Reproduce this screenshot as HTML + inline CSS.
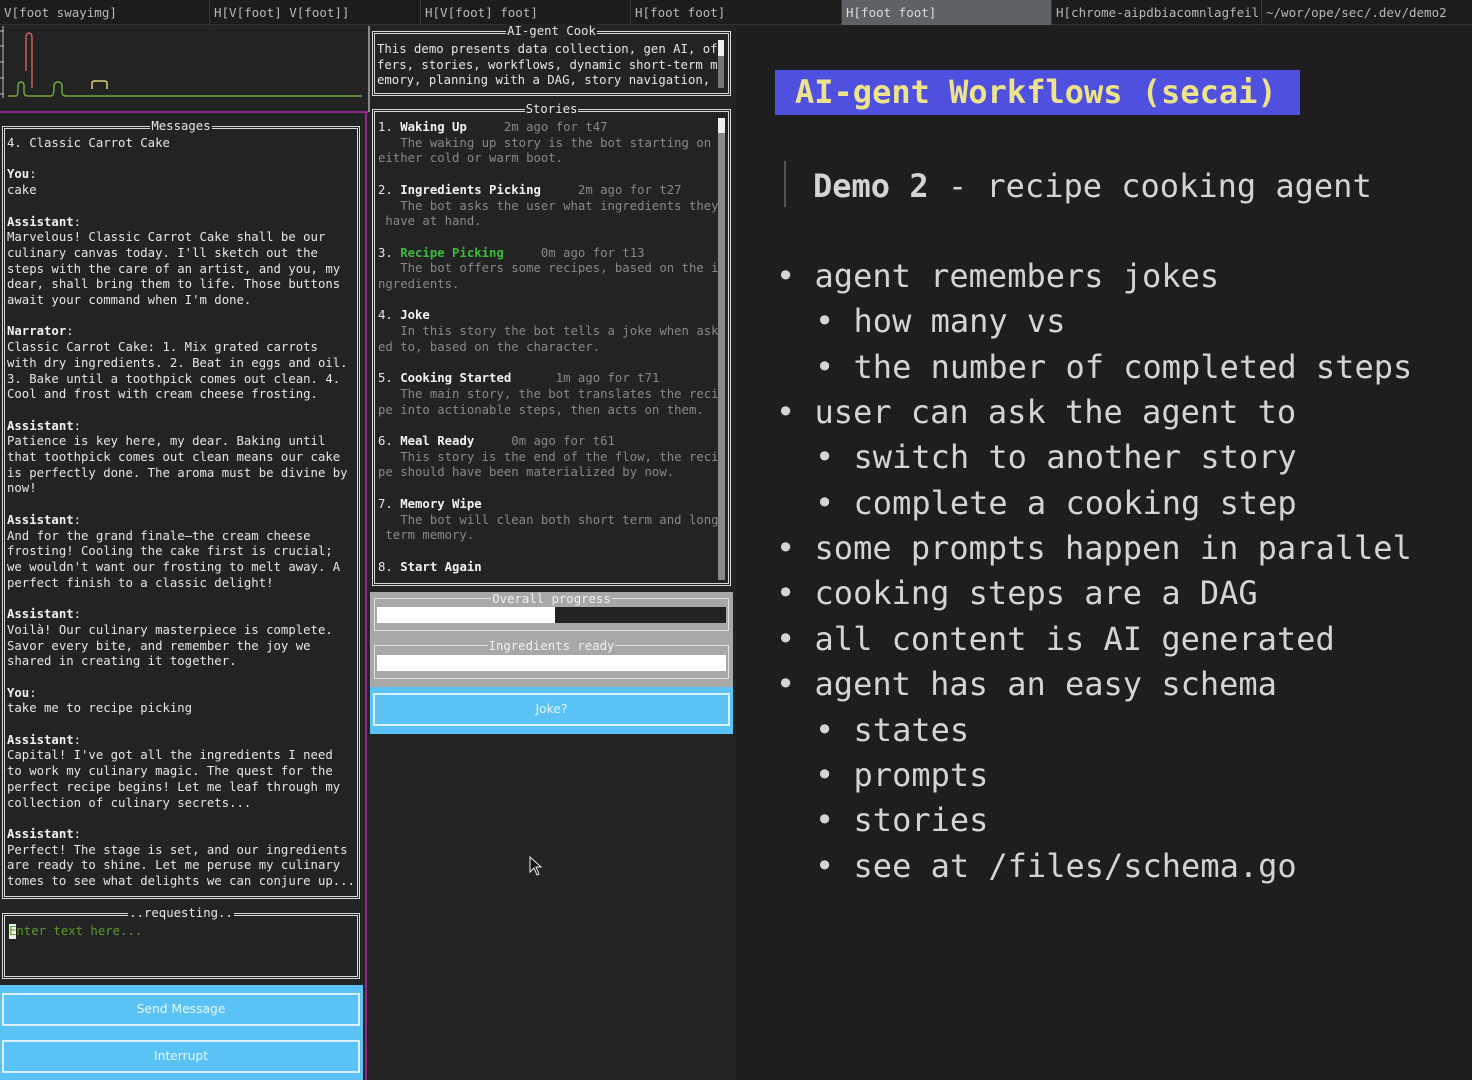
<!DOCTYPE html>
<html><head><meta charset="utf-8"><style>
*{margin:0;padding:0;box-sizing:border-box}
body{width:1472px;height:1080px;background:#232323;position:relative;overflow:hidden;font-family:"DejaVu Sans Mono","Liberation Mono",monospace;color:#e6e6e6}
.a{position:absolute}
.tab{position:absolute;top:0;height:25px;font-size:12.5px;line-height:25px;color:#b8b8b8;padding-left:4px;border-right:1px solid #3a3a3a;white-space:nowrap;overflow:hidden}
pre{font-family:"DejaVu Sans Mono","Liberation Mono",monospace;font-size:12.3px;line-height:15.7px;white-space:pre}
.box{position:absolute;border:3px double #d8d8d8}
.ttl{position:absolute;top:-10px;left:0;right:0;text-align:center;font-size:12.3px;line-height:15px}
.ttl span{background:#232323;padding:0 1px}
.g{color:#888}
b{color:#f2f2f2}
.r{position:absolute;font-size:32px;line-height:40px;color:#d4d4d4;white-space:pre;font-family:"DejaVu Sans Mono",monospace}
.btn{position:absolute;border:2px solid #d8f0ff;color:#e8f6ff;text-align:center;font-size:12.3px;font-family:"DejaVu Sans",sans-serif}
</style></head><body>
<div class="a" style="left:0;top:0;width:1472px;height:25px;background:#1c1c1c;border-bottom:1px solid #333"></div>
<div class="tab" style="left:0;width:210px">V[foot swayimg]</div>
<div class="tab" style="left:210px;width:211px">H[V[foot] V[foot]]</div>
<div class="tab" style="left:421px;width:210px">H[V[foot] foot]</div>
<div class="tab" style="left:631px;width:211px">H[foot foot]</div>
<div class="tab" style="left:842px;width:210px;background:#5e6165;color:#ddd">H[foot foot]</div>
<div class="tab" style="left:1052px;width:210px">H[chrome-aipdbiacomnlagfeil</div>
<div class="tab" style="left:1262px;width:210px;border:none">~/wor/ope/sec/.dev/demo2</div>

<div class="a" style="left:736px;top:26px;width:736px;height:1054px;background:#1e1e1e"></div>

<!-- graph -->
<svg class="a" style="left:0;top:26px" width="366" height="90">
<line x1="3" y1="0" x2="3" y2="72" stroke="#bbb" stroke-width="1"/>
<path d="M0 5h4M0 20h4M0 36h4M0 52h4M0 68h4" stroke="#bbb"/>
<path d="M8 70H16Q18 70 18 62V60Q18 56 21 56Q24 56 24 60V66Q24 70 28 70H51Q54 70 54 62V60Q54 56 58 56Q62 56 62 60V66Q62 70 66 70H362" stroke="#6fa83a" stroke-width="1.5" fill="none"/>
<path d="M26 45V12Q26 7 29 7Q32 7 32 12V62" stroke="#c86060" stroke-width="1.5" fill="none"/>
<path d="M92 63V57Q92 55 95 55H104Q107 55 107 57V63" stroke="#d8d080" stroke-width="1.5" fill="none"/>
</svg>
<div class="a" style="left:368px;top:26px;width:2px;height:86px;background:#8a8a8a"></div>
<div class="a" style="left:0;top:111px;width:368px;height:2px;background:#8e2a8e"></div>
<div class="a" style="left:365px;top:111px;width:2px;height:969px;background:#8e2a8e"></div>

<!-- messages -->
<div class="box" style="left:2px;top:126px;width:358px;height:773px">
<div class="ttl"><span>Messages</span></div>
<pre class="a" style="left:2px;top:7px">4. Classic Carrot Cake

<b>You</b>:
cake

<b>Assistant</b>:
Marvelous! Classic Carrot Cake shall be our
culinary canvas today. I'll sketch out the
steps with the care of an artist, and you, my
dear, shall bring them to life. Those buttons
await your command when I'm done.

<b>Narrator</b>:
Classic Carrot Cake: 1. Mix grated carrots
with dry ingredients. 2. Beat in eggs and oil.
3. Bake until a toothpick comes out clean. 4.
Cool and frost with cream cheese frosting.

<b>Assistant</b>:
Patience is key here, my dear. Baking until
that toothpick comes out clean means our cake
is perfectly done. The aroma must be divine by
now!

<b>Assistant</b>:
And for the grand finale—the cream cheese
frosting! Cooling the cake first is crucial;
we wouldn't want our frosting to melt away. A
perfect finish to a classic delight!

<b>Assistant</b>:
Voilà! Our culinary masterpiece is complete.
Savor every bite, and remember the joy we
shared in creating it together.

<b>You</b>:
take me to recipe picking

<b>Assistant</b>:
Capital! I've got all the ingredients I need
to work my culinary magic. The quest for the
perfect recipe begins! Let me leaf through my
collection of culinary secrets...

<b>Assistant</b>:
Perfect! The stage is set, and our ingredients
are ready to shine. Let me peruse my culinary
tomes to see what delights we can conjure up...</pre>
</div>

<div class="box" style="left:2px;top:913px;width:358px;height:66px">
<div class="ttl"><span>..requesting..</span></div>
<div class="a" style="left:4px;top:8px;width:7px;height:15px;background:#eee"></div>
<pre class="a" style="left:4px;top:8px;color:#5a9a30">Enter text here...</pre>
</div>

<div class="a" style="left:0;top:985px;width:363px;height:95px;background:#5bc2f5"></div>
<div class="btn" style="left:2px;top:993px;width:358px;height:33px;line-height:29px">Send Message</div>
<div class="btn" style="left:2px;top:1040px;width:358px;height:33px;line-height:29px">Interrupt</div>

<!-- AI-gent cook -->
<div class="box" style="left:372px;top:31px;width:359px;height:65px">
<div class="ttl"><span>AI-gent Cook</span></div>
<pre class="a" style="left:2px;top:8px">This demo presents data collection, gen AI, of
fers, stories, workflows, dynamic short-term m
emory, planning with a DAG, story navigation,</pre>
<div class="a" style="left:343px;top:6px;width:6px;height:48px;background:#777"></div>
<div class="a" style="left:343px;top:6px;width:6px;height:16px;background:#eee"></div>
</div>

<!-- stories -->
<div class="box" style="left:372px;top:109px;width:359px;height:477px">
<div class="ttl"><span>Stories</span></div>
<pre class="a" style="left:3px;top:8px">1. <b>Waking Up</b>     <span class="g">2m ago for t47</span>
<span class="g">   The waking up story is the bot starting on
either cold or warm boot.</span>

2. <b>Ingredients Picking</b>     <span class="g">2m ago for t27</span>
<span class="g">   The bot asks the user what ingredients they
 have at hand.</span>

3. <b style="color:#3cba3c">Recipe Picking</b>     <span class="g">0m ago for t13</span>
<span class="g">   The bot offers some recipes, based on the i
ngredients.</span>

4. <b>Joke</b>
<span class="g">   In this story the bot tells a joke when ask
ed to, based on the character.</span>

5. <b>Cooking Started</b>      <span class="g">1m ago for t71</span>
<span class="g">   The main story, the bot translates the reci
pe into actionable steps, then acts on them.</span>

6. <b>Meal Ready</b>     <span class="g">0m ago for t61</span>
<span class="g">   This story is the end of the flow, the reci
pe should have been materialized by now.</span>

7. <b>Memory Wipe</b>
<span class="g">   The bot will clean both short term and long
 term memory.</span>

8. <b>Start Again</b></pre>
<div class="a" style="left:343px;top:6px;width:7px;height:462px;background:#888"></div>
<div class="a" style="left:343px;top:6px;width:7px;height:15px;background:#eee"></div>
</div>

<!-- progress -->
<div class="a" style="left:370px;top:592px;width:363px;height:95px;background:#a8a8a8"></div>
<div class="a" style="left:374px;top:598px;width:355px;height:33px;border:1px solid #e0e0e0"></div>
<div class="a" style="left:370px;top:592px;width:363px;text-align:center;font-size:12.3px;color:#f0f0f0"><span style="background:#a8a8a8;padding:0 1px">Overall progress</span></div>
<div class="a" style="left:377px;top:607px;width:349px;height:16px;background:#222"></div>
<div class="a" style="left:377px;top:607px;width:178px;height:16px;background:#fff"></div>
<div class="a" style="left:374px;top:645px;width:355px;height:34px;border:1px solid #e0e0e0"></div>
<div class="a" style="left:370px;top:639px;width:363px;text-align:center;font-size:12.3px;color:#f0f0f0"><span style="background:#a8a8a8;padding:0 1px">Ingredients ready</span></div>
<div class="a" style="left:377px;top:655px;width:349px;height:16px;background:#fff"></div>
<div class="a" style="left:370px;top:687px;width:363px;height:47px;background:#5bc2f5"></div>
<div class="btn" style="left:373px;top:693px;width:357px;height:33px;line-height:29px">Joke?</div>

<!-- slide -->
<div class="a" style="left:775px;top:70px;width:525px;height:45px;background:#5050e0"></div>
<div class="r" style="left:795px;top:72px;color:#ece38a;font-weight:bold">AI-gent Workflows (secai)</div>
<div class="a" style="left:784px;top:161px;width:2px;height:46px;background:#555"></div>
<div class="r" style="left:813px;top:166px"><b style="color:#d4d4d4">Demo 2</b> - recipe cooking agent</div>
<div class="r" style="left:776px;top:256px">• agent remembers jokes</div>
<div class="r" style="left:815px;top:301px">• how many vs</div>
<div class="r" style="left:815px;top:347px">• the number of completed steps</div>
<div class="r" style="left:776px;top:392px">• user can ask the agent to</div>
<div class="r" style="left:815px;top:437px">• switch to another story</div>
<div class="r" style="left:815px;top:483px">• complete a cooking step</div>
<div class="r" style="left:776px;top:528px">• some prompts happen in parallel</div>
<div class="r" style="left:776px;top:573px">• cooking steps are a DAG</div>
<div class="r" style="left:776px;top:619px">• all content is AI generated</div>
<div class="r" style="left:776px;top:664px">• agent has an easy schema</div>
<div class="r" style="left:815px;top:710px">• states</div>
<div class="r" style="left:815px;top:755px">• prompts</div>
<div class="r" style="left:815px;top:800px">• stories</div>
<div class="r" style="left:815px;top:846px">• see at /files/schema.go</div>

<svg class="a" style="left:529px;top:856px" width="14" height="20"><path d="M1 1V16L5 12L8 19L10 18L7 11H12Z" fill="#111" stroke="#eee" stroke-width="1"/></svg>
</body></html>
